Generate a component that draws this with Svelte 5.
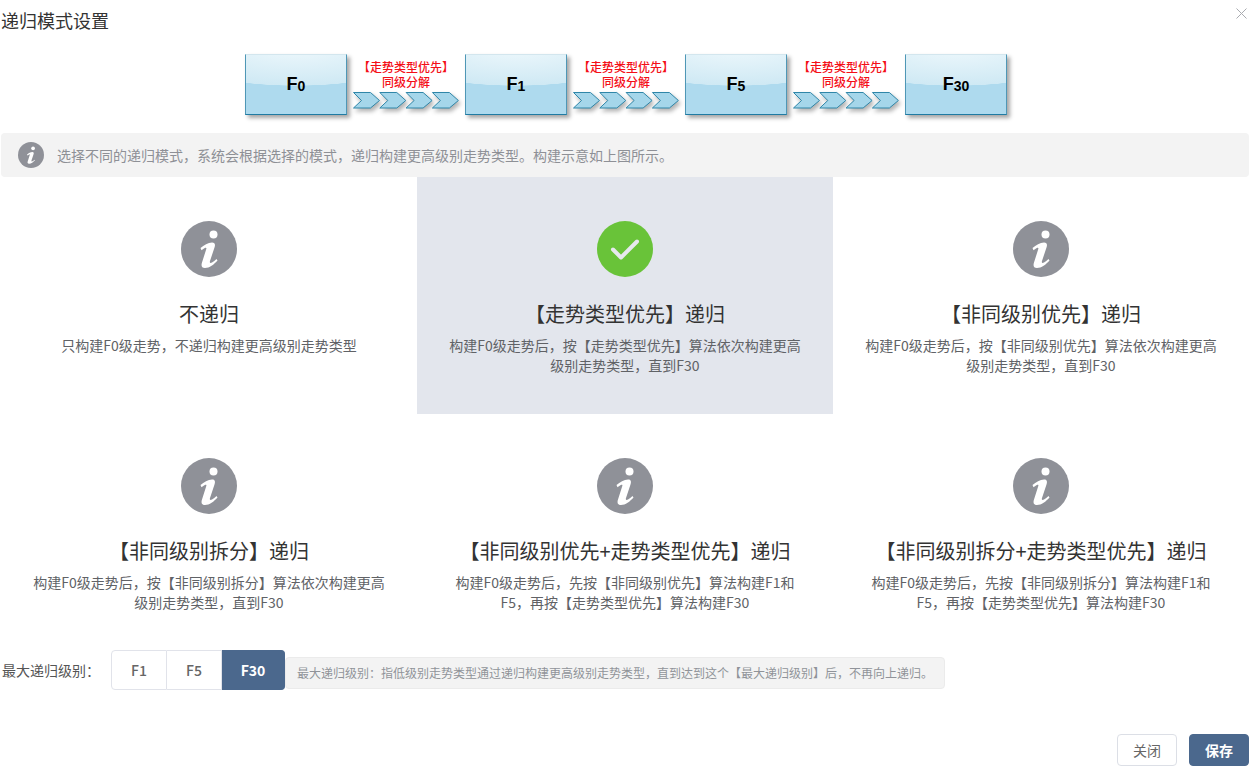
<script>
  const stages = [
    { main: "F", sub: "0" },
    { main: "F", sub: "1" },
    { main: "F", sub: "5" },
    { main: "F", sub: "30" }
  ];
  const modes = [
    { title: "不递归", desc: "只构建F0级走势，不递归构建更高级别走势类型" },
    { title: "【走势类型优先】递归", desc: "构建F0级走势后，按【走势类型优先】算法依次构建更高级别走势类型，直到F30", active: true },
    { title: "【非同级别优先】递归", desc: "构建F0级走势后，按【非同级别优先】算法依次构建更高级别走势类型，直到F30" },
    { title: "【非同级别拆分】递归", desc: "构建F0级走势后，按【非同级别拆分】算法依次构建更高级别走势类型，直到F30" },
    { title: "【非同级别优先+走势类型优先】递归", desc: "构建F0级走势后，先按【非同级别优先】算法构建F1和F5，再按【走势类型优先】算法构建F30" },
    { title: "【非同级别拆分+走势类型优先】递归", desc: "构建F0级走势后，先按【非同级别拆分】算法构建F1和F5，再按【走势类型优先】算法构建F30" }
  ];
  const levels = ["F1", "F5", "F30"];
  let level = $state("F30");
  let mode = $state(1);
</script>

{#snippet infoIcon(size)}
  <svg class="icon" width={size} height={size} viewBox="0 0 56 56">
    <circle cx="28" cy="28" r="28" fill="#8f9198" />
    <circle cx="32.500" cy="13.500" r="4" fill="#fff" />
    <path d="M19.500 27C23 24 27 21.500 31 21.500 34 21.500 34.500 23.500 33.500 26.500L29 40C28.400 42 29.400 42.500 31 41.500 32.500 40.600 34 39.500 35.500 38L36.500 39.500C33 43.500 28.500 47 24 47 20.500 47 20 44.500 21 41.500L25.300 28C25.700 26.800 25 26.200 23.800 27 22.800 27.600 21.800 28.200 20.500 29.200z" fill="#fff" />
  </svg>
{/snippet}

<div class="dialog">
  <header class="head">
    <h1>递归模式设置</h1>
    <button class="close" aria-label="关闭">
      <svg width="11" height="11" viewBox="0 0 11 11"><path d="M.5.5l10 10M10.500.5l-10 10" stroke="#a9abb0" fill="none" /></svg>
    </button>
  </header>

  <div class="flow">
    {#each stages as s, i}
      <div class="stage"><b>{s.main}</b><span>{s.sub}</span></div>
      {#if i < stages.length - 1}
        <div class="link">
          <div class="link-text">【走势类型优先】<br />同级分解</div>
          <svg class="chevrons" width="106" height="20" viewBox="0 0 106 20">
            {#each [0, 26.300, 52.600, 78.900] as x}
              <path d="M{x + .5} 2.500h17l9 8-9 7.500h-17l8-7.500z" fill="#a5d6ea" stroke="#2f86a8" />
            {/each}
          </svg>
        </div>
      {/if}
    {/each}
  </div>

  <div class="notice">
    {@render infoIcon(26)}
    <span>选择不同的递归模式，系统会根据选择的模式，递归构建更高级别走势类型。构建示意如上图所示。</span>
  </div>

  <div class="modes">
    {#each modes as m, i}
      <button class="mode" class:active={mode === i} onclick={() => (mode = i)}>
        {#if mode === i}
          <svg class="icon" width="56" height="56" viewBox="0 0 56 56">
            <circle cx="28" cy="28" r="28" fill="#69c339" />
            <path d="M16 28.500l8 8 16-16" fill="none" stroke="#e6e8ee" stroke-width="4" stroke-linecap="round" stroke-linejoin="round" />
          </svg>
        {:else}
          {@render infoIcon(56)}
        {/if}
        <div class="mode-title">{m.title}</div>
        <div class="mode-desc">{m.desc}</div>
      </button>
    {/each}
  </div>

  <div class="level-row">
    <span class="level-label">最大递归级别：</span>
    <div class="levels">
      {#each levels as l}
        <button class="level" class:on={level === l} onclick={() => (level = l)}>{l}</button>
      {/each}
    </div>
    <div class="hint">最大递归级别：指低级别走势类型通过递归构建更高级别走势类型，直到达到这个【最大递归级别】后，不再向上递归。</div>
  </div>

  <footer class="foot">
    <button class="btn">关闭</button>
    <button class="btn primary">保存</button>
  </footer>
</div>

<style>
  :global(body) {
    margin: 0;
    background: #fff;
  }
  .dialog {
    width: 1259px;
    height: 771px;
    box-sizing: border-box;
    padding: 0 10px 0 1px;
    position: relative;
    overflow: hidden;
    font-family: "Noto Sans CJK SC", "Noto Sans", sans-serif;
    color: #333;
  }
  button {
    font-family: inherit;
    padding: 0;
    cursor: pointer;
  }
  .head {
    height: 54px;
  }
  h1 {
    margin: 0;
    padding-top: 8px;
    font-size: 18px;
    line-height: 25px;
    font-weight: 400;
    color: #333;
  }
  .close {
    position: absolute;
    top: 8px;
    right: 12px;
    width: 11px;
    height: 11px;
    border: 0;
    background: none;
    display: flex;
  }
  .flow {
    display: flex;
    justify-content: center;
    padding-left: 2px;
    height: 79px;
  }
  .stage {
    width: 100px;
    height: 59px;
    border: 1px solid #d8e8ef;
    border-bottom-color: #1f7ba3;
    border-left-color: #4f97b6;
    border-right-color: #4f97b6;
    border-top-color: #d3e6ee;
    background:
      radial-gradient(140% 40px at 50% -8px, #eef8fc 0%, #cfe9f4 96%, transparent 97%),
      #aedaee;
    box-shadow: 3px 3px 4px rgba(0, 0, 0, 0.35);
    display: flex;
    align-items: center;
    justify-content: center;
    font-family: "Liberation Sans", sans-serif;
    color: #000;
    flex: none;
  }
  .stage b {
    font-size: 18px;
  }
  .stage span {
    font-size: 14px;
    font-weight: 700;
    padding-top: 2px;
  }
  .link {
    width: 118px;
    flex: none;
    display: flex;
    flex-direction: column;
    align-items: center;
    padding-top: 5px;
  }
  .link-text {
    color: #f40f17;
    font-size: 12px;
    line-height: 15px;
    font-weight: 500;
    text-align: center;
    height: 31px;
  }
  .chevrons {
    display: block;
    filter: drop-shadow(2px 3px 2px rgba(0, 0, 0, 0.3));
  }
  .notice {
    height: 44px;
    background: #f3f3f3;
    border-radius: 4px;
    display: flex;
    align-items: center;
    gap: 13px;
    padding-left: 17px;
    font-size: 14px;
    color: #8e9096;
  }
  .icon {
    display: block;
    flex: none;
  }
  .modes {
    display: grid;
    grid-template-columns: repeat(3, 416px);
    grid-auto-rows: 237px;
  }
  .mode {
    border: 0;
    background: none;
    display: flex;
    flex-direction: column;
    align-items: center;
    padding: 44px 30px 0;
    text-align: center;
    color: #333;
  }
  .mode.active {
    background: #e3e6ed;
  }
  .mode-title {
    margin-top: 23px;
    font-size: 20px;
    line-height: 28px;
  }
  .mode-desc {
    margin-top: 7px;
    font-size: 14px;
    line-height: 20px;
    color: #606266;
    max-width: 356px;
  }
  .level-row {
    display: flex;
    align-items: flex-start;
    margin-top: -1px;
    height: 40px;
  }
  .level-label {
    font-size: 14px;
    line-height: 40px;
    color: #555;
    width: 110px;
    flex: none;
    padding-left: 1px;
    box-sizing: border-box;
  }
  .levels {
    display: flex;
    flex: none;
  }
  .level {
    width: 55px;
    height: 40px;
    border: 1px solid #e1e3ea;
    border-left-width: 0;
    background: #fff;
    font-size: 14px;
    font-weight: 500;
    color: #666;
  }
  .level:first-child {
    width: 56px;
    border-left-width: 1px;
    border-radius: 4px 0 0 4px;
  }
  .level:last-child {
    width: 63px;
    border-radius: 0 4px 4px 0;
  }
  .level.on {
    background: #4b688d;
    border-color: #4b688d;
    color: #fff;
    font-weight: 700;
  }
  .hint {
    width: 660px;
    margin-top: 7px;
    box-sizing: border-box;
    height: 32px;
    line-height: 30px;
    padding-left: 11px;
    background: #f3f3f3;
    border: 1px solid #ebebeb;
    border-radius: 4px;
    font-size: 12px;
    color: #909399;
    white-space: nowrap;
  }
  .foot {
    position: absolute;
    right: 10px;
    bottom: 5px;
    display: flex;
    gap: 12px;
  }
  .btn {
    width: 60px;
    height: 32px;
    border: 1px solid #dcdfe6;
    border-radius: 4px;
    background: #fff;
    font-size: 14px;
    color: #666;
  }
  .btn.primary {
    background: #4b688d;
    border-color: #4b688d;
    color: #fff;
    font-weight: 700;
  }
</style>
